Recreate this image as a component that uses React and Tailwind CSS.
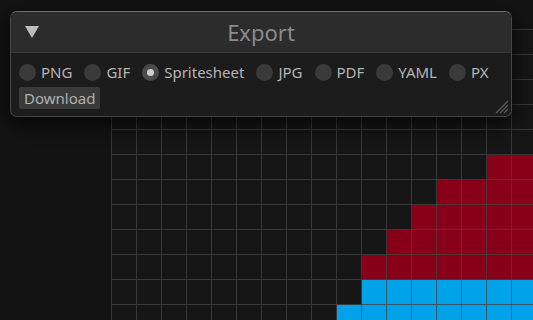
import React from 'react';

const COLS = 17;
const ROWS = 12;
const formats = ['PNG', 'GIF', 'Spritesheet', 'JPG', 'PDF', 'YAML', 'PX'];

// first coloured column for each row, red rows then blue rows
const fills = {
	5: { from: 15, color: 'red' },
	6: { from: 13, color: 'red' },
	7: { from: 12, color: 'red' },
	8: { from: 11, color: 'red' },
	9: { from: 10, color: 'red' },
	10: { from: 10, color: 'blue' },
	11: { from: 9, color: 'blue' },
};

function cellClass(r, c) {
	const f = fills[r];
	if (f && c >= f.from) return f.color === 'red' ? 'bg-[#880018]' : 'bg-[#00a2e8]';
	return 'bg-[#161616]';
}

function Radio({ label, checked }) {
	return (
		<label className="flex items-center gap-[5px]">
			<span className={`w-[17px] h-[17px] rounded-full flex items-center justify-center ${checked ? 'bg-[#4a4a4a]' : 'bg-[#3a3a3a]'}`}>
				{checked && <span className="w-[7px] h-[7px] rounded-full bg-[#cfcfcf]" />}
			</span>
			<span className="text-[#b5b5b5]">{label}</span>
		</label>
	);
}

export default function App() {
	return (
		<div className="relative w-[533px] h-[320px] overflow-hidden bg-[#131313]" style={{ fontFamily: '"Noto Sans", "Open Sans", sans-serif' }}>
			{/* pixel canvas */}
			<div className="absolute left-[111px] top-[29px] grid grid-cols-[repeat(17,25px)] border-l border-t border-[rgba(66,66,66,0.8)]">
				{Array.from({ length: ROWS * COLS }).map((_, i) => {
					const r = Math.floor(i / COLS);
					const c = i % COLS;
					return <div key={i} className={`w-[25px] h-[25px] border-r border-b border-[rgba(66,66,66,0.78)] ${cellClass(r, c)}`} />;
				})}
			</div>

			{/* export panel */}
			<div className="absolute left-[10px] top-[11px] w-[502px] h-[106px] rounded-[7px] border border-[#464646] border-t-[#6c6c6c] bg-[#1c1c1c] shadow-[0_6px_22px_rgba(0,0,0,0.75)] overflow-hidden">
				<div className="relative h-[41px] bg-[#2c2c2c] border-b border-[#393939] flex items-center justify-center">
					<svg className="absolute left-[14px] top-[14px]" width="14" height="13" viewBox="0 0 14 13">
						<polygon points="0,0 14,0 7,12" fill="#bdbdbd" />
					</svg>
					<span className="text-[22px] text-[#8a8a8a] leading-none">Export</span>
				</div>
				<div className="px-[8px] pt-[11px] text-[15px] leading-[17px]">
					<div className="flex items-center gap-[12px]">
						{formats.map((f) => (
							<Radio key={f} label={f} checked={f === 'Spritesheet'} />
						))}
					</div>
					<button className="mt-[6px] h-[22px] px-[5px] rounded-[2px] bg-[#3a3a3a] text-[#b0b0b0] text-[15px] leading-none">Download</button>
				</div>
				<svg className="absolute right-[2px] bottom-[2px]" width="14" height="14" viewBox="0 0 14 14">
					<line x1="1" y1="13" x2="13" y2="1" stroke="#5a5a5a" strokeWidth="1.2" />
					<line x1="5" y1="13" x2="13" y2="5" stroke="#5a5a5a" strokeWidth="1.2" />
					<line x1="9" y1="13" x2="13" y2="9" stroke="#5a5a5a" strokeWidth="1.2" />
				</svg>
			</div>
		</div>
	);
}
